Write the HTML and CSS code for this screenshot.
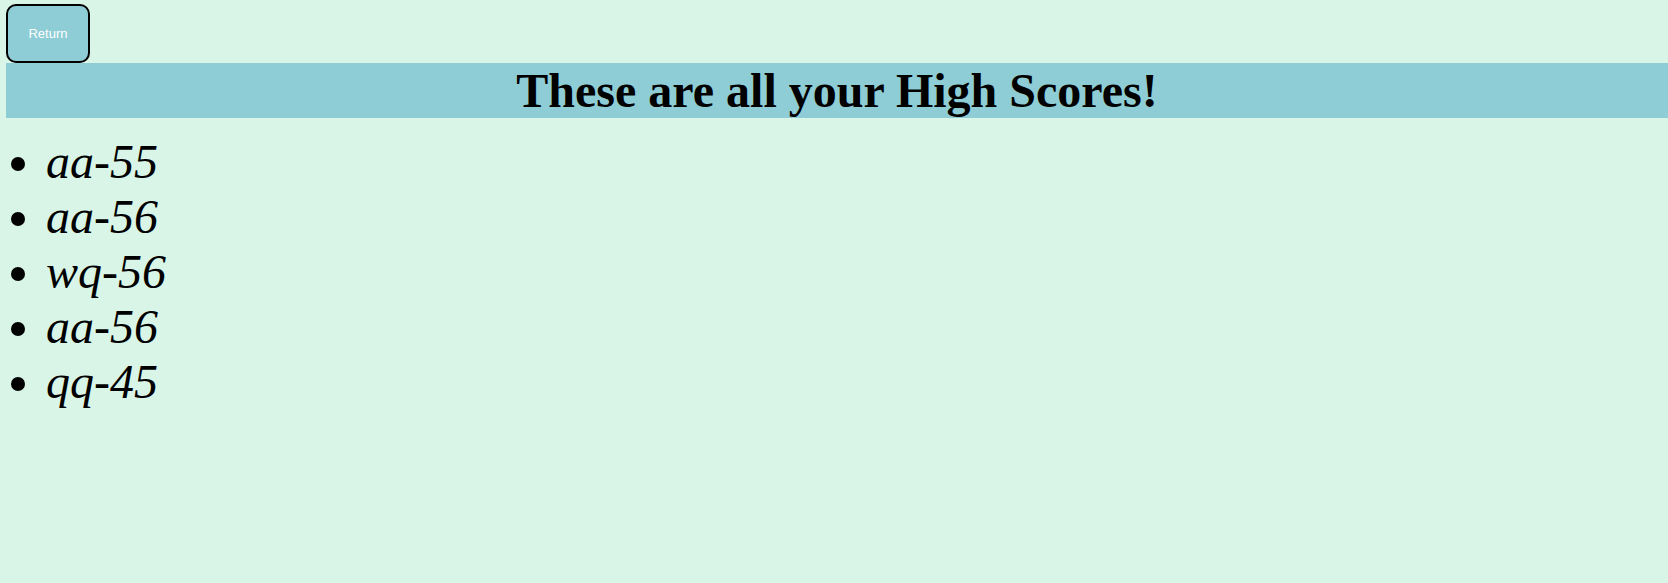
FILE: index.html
```html
<!DOCTYPE html>
<html>
<head>
<meta charset="utf-8">
<link rel="stylesheet" href="styles.css">
</head>
<body>
<div class="top">
<button class="return-btn">Return</button>
</div>
<h1 class="title">These are all your High Scores!</h1>
<ul class="scores">
<li>aa-55</li>
<li>aa-56</li>
<li>wq-56</li>
<li>aa-56</li>
<li>qq-45</li>
</ul>
</body>
</html>
```

FILE: styles.css
```css
html, body {
  margin: 0;
  background: #d8f5e7;
}
body {
  padding: 4px 0 0 6px;
  font-family: "Liberation Serif", "Times New Roman", serif;
}
.top {
  display: block;
}
.return-btn {
  display: block;
  width: 84px;
  height: 59px;
  margin: 0;
  padding: 0;
  background: #8ecdd5;
  border: 2px solid #000;
  border-radius: 10px;
  color: #fff;
  font-family: "Liberation Sans", Arial, sans-serif;
  font-size: 13px;
}
.title {
  margin: 0;
  background: #8ecdd5;
  text-align: center;
  font-size: 48px;
  font-weight: bold;
  line-height: normal;
}
.scores {
  margin: 16px 0 0 0;
  padding-left: 40px;
}
.scores li {
  font-size: 48px;
  font-style: italic;
  line-height: normal;
}
```
